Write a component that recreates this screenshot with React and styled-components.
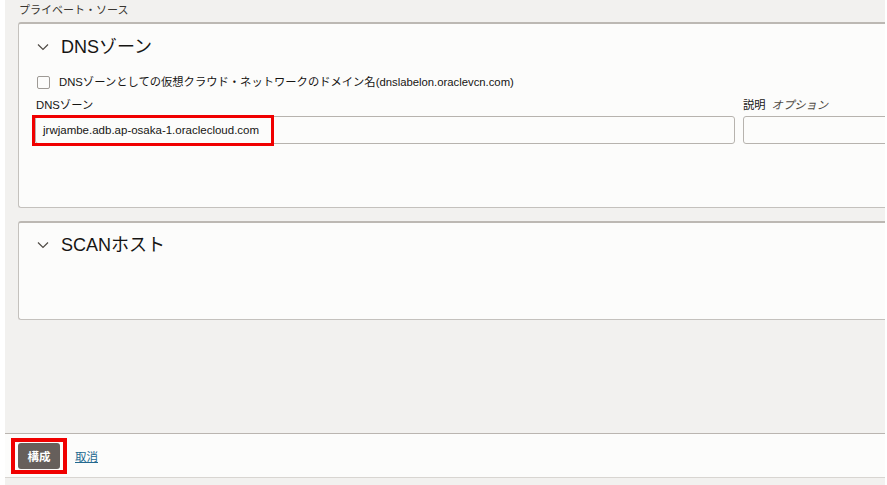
import React from 'react';
import styled, { createGlobalStyle } from 'styled-components';

const GlobalStyle = createGlobalStyle`
  html, body {
    margin: 0;
    padding: 0;
    background: #ffffff;
    overflow: hidden;
  }
  body {
    font-family: "Liberation Sans", "Noto Sans CJK JP", sans-serif;
    color: #161513;
  }
`;

const Page = styled.div`
  width: 887px;
  height: 485px;
  padding: 0 2px 0 5px;
  box-sizing: border-box;
  overflow: hidden;
`;

const Shell = styled.div`
  background: #f2f1ef;
  height: 485px;
  display: flex;
  flex-direction: column;
`;

const Content = styled.div`
  height: 433px;
  padding: 3px 0 0 13px;
  box-sizing: border-box;
  display: flex;
  flex-direction: column;
  overflow: hidden;
`;

const SectionLabel = styled.div`
  font-size: 11px;
  line-height: 14px;
  color: #3a3631;
  padding-left: 1px;
  margin-bottom: 5px;
`;

const Panel = styled.section`
  background: #fcfcfb;
  border: 1px solid #c4c1bd;
  border-top: 2px solid #bcb8b3;
  border-right: none;
  border-radius: 3px 0 0 3px;
  height: ${p => p.$height}px;
  box-sizing: border-box;
  margin-bottom: 13px;
  padding: ${p => p.$padTop}px 0 0 14px;
  overflow: hidden;
`;

const Header = styled.div`
  display: flex;
  align-items: center;
  gap: 12px;
  padding-left: 4px;
  height: 24px;
`;

const Chevron = styled.svg`
  width: 12px;
  height: 8px;
  flex: none;
`;

const Title = styled.h2`
  margin: 0;
  font-size: 18px;
  font-weight: 400;
  line-height: 24px;
  color: #161513;
`;

const CheckRow = styled.label`
  display: flex;
  align-items: center;
  gap: 9px;
  margin: 17px 0 0 4px;
  font-size: 11.3px;
  line-height: 13px;
  color: #161513;
`;

const Box = styled.span`
  width: 13px;
  height: 13px;
  box-sizing: border-box;
  border: 1px solid #9e9a95;
  border-radius: 2px;
  background: #fcfcfb;
  flex: none;
`;

const FieldRow = styled.div`
  display: grid;
  grid-template-columns: 700px 300px;
  column-gap: 8px;
  margin-top: 8px;
  padding-left: 2px;
`;

const Field = styled.div`
  display: flex;
  flex-direction: column;
`;

const Label = styled.div`
  font-size: 11.3px;
  line-height: 16px;
  color: #161513;
  padding-left: ${p => p.$inset || 0}px;
  white-space: nowrap;
`;

const Optional = styled.span`
  font-style: italic;
  color: #4f4a45;
  margin-left: 6px;
`;

const InputWrap = styled.div`
  position: relative;
  margin-top: 3px;
`;

const Input = styled.div`
  height: 28px;
  box-sizing: border-box;
  border: 1px solid #b7b3ae;
  border-radius: 3px;
  background: #fcfcfb;
  font-size: 11.5px;
  line-height: 26px;
  padding-left: 7px;
  color: #161513;
  white-space: nowrap;
`;

const Highlight = styled.div`
  position: absolute;
  left: ${p => p.$left}px;
  top: ${p => p.$top}px;
  width: ${p => p.$width}px;
  height: ${p => p.$height}px;
  border: ${p => p.$thick}px solid #f00000;
  box-sizing: border-box;
  pointer-events: none;
`;

const Footer = styled.footer`
  border-top: 1px solid #bab5b0;
  border-bottom: 1px solid #d8d5d1;
  background: #fcfcfb;
  height: 45px;
  box-sizing: border-box;
  display: flex;
  align-items: center;
  gap: 15px;
  padding: 0 0 0 13px;
`;

const BtnWrap = styled.div`
  position: relative;
  display: flex;
`;

const PrimaryButton = styled.button`
  width: 42px;
  height: 26px;
  border: none;
  border-radius: 3px;
  background: #665f5b;
  color: #ffffff;
  font-family: "Noto Sans CJK JP", sans-serif;
  font-size: 11.5px;
  font-weight: 700;
  padding: 0;
  cursor: pointer;
`;

const CancelLink = styled.a`
  font-size: 11.5px;
  color: #23698f;
  text-decoration: underline;
  font-family: "Noto Sans CJK JP", sans-serif;
  cursor: pointer;
`;

const ChevronIcon = () => (
  <Chevron viewBox="0 0 12 8">
    <path d="M1 1.5 L6 6.5 L11 1.5" fill="none" stroke="#4f4a45" strokeWidth="1.2" />
  </Chevron>
);

export default function App() {
  return (
    <Page>
      <GlobalStyle />
      <Shell>
        <Content>
          <SectionLabel>プライベート・ソース</SectionLabel>

          <Panel $height={186} $padTop={11}>
            <Header>
              <ChevronIcon />
              <Title>DNSゾーン</Title>
            </Header>
            <CheckRow>
              <Box />
              DNSゾーンとしての仮想クラウド・ネットワークのドメイン名(dnslabelon.oraclevcn.com)
            </CheckRow>
            <FieldRow>
              <Field>
                <Label $inset={1}>DNSゾーン</Label>
                <InputWrap>
                  <Input>jrwjambe.adb.ap-osaka-1.oraclecloud.com</Input>
                  <Highlight $left={-3} $top={-1} $width={242} $height={31} $thick={3} />
                </InputWrap>
              </Field>
              <Field>
                <Label>説明<Optional>オプション</Optional></Label>
                <InputWrap>
                  <Input />
                </InputWrap>
              </Field>
            </FieldRow>
          </Panel>

          <Panel $height={99} $padTop={10}>
            <Header>
              <ChevronIcon />
              <Title>SCANホスト</Title>
            </Header>
          </Panel>
        </Content>

        <Footer>
          <BtnWrap>
            <PrimaryButton>構成</PrimaryButton>
            <Highlight $left={-7} $top={-5} $width={56} $height={36} $thick={4} />
          </BtnWrap>
          <CancelLink>取消</CancelLink>
        </Footer>
      </Shell>
    </Page>
  );
}
